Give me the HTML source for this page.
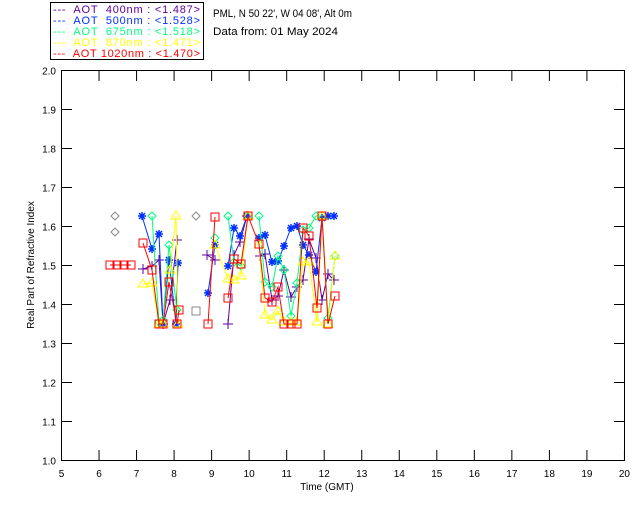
<!DOCTYPE html>
<html><head><meta charset="utf-8"><style>
body{margin:0;background:#fff;width:640px;height:512px;overflow:hidden}
svg{display:block;font-family:"Liberation Sans",sans-serif}
text{white-space:pre}
</style></head><body>
<svg id="s" width="640" height="512" xmlns="http://www.w3.org/2000/svg">
<rect x="50.5" y="2.5" width="153" height="57" fill="none" stroke="#000"/>
<g font-size="11">
<text x="53" y="13" fill="#6000a0" textLength="147" lengthAdjust="spacing">---  AOT  400nm : &lt;1.487&gt;</text>
<text x="53" y="24" fill="#0030ff" textLength="147" lengthAdjust="spacing">---  AOT  500nm : &lt;1.528&gt;</text>
<text x="53" y="35" fill="#00ff80" textLength="147" lengthAdjust="spacing">---  AOT  675nm : &lt;1.518&gt;</text>
<text x="53" y="46" fill="#ffff00" textLength="147" lengthAdjust="spacing">---  AOT  870nm : &lt;1.471&gt;</text>
<text x="53" y="57" fill="#ff0000" textLength="147" lengthAdjust="spacing">---  AOT 1020nm : &lt;1.470&gt;</text>
<text x="213" y="17" fill="#000" textLength="139" lengthAdjust="spacingAndGlyphs">PML, N 50 22', W 04 08', Alt 0m</text>
<text x="213" y="35" fill="#000" textLength="125" lengthAdjust="spacingAndGlyphs">Data from: 01 May 2024</text>
</g>
<rect x="61.5" y="70.5" width="563" height="390" fill="none" stroke="#000"/>
<g id="ax" stroke="#000"></g>
<g id="lb" font-size="10" fill="#000"></g>
<text x="327" y="490" font-size="10" text-anchor="middle">Time (GMT)</text>
<text transform="translate(34,265) rotate(-90)" font-size="10" text-anchor="middle">Real Part of Refractive Index</text>
<g id="d" fill="none" stroke-width="1"></g>
</svg>
<script>
var NS="http://www.w3.org/2000/svg";
function el(p,t,a,txt){var e=document.createElementNS(NS,t);for(var k in a)e.setAttribute(k,a[k]);if(txt)e.textContent=txt;document.getElementById(p).appendChild(e);return e;}
for(var i=0;i<=15;i++){var x=61.5+i*37.53;el("ax","line",{x1:x,y1:460,x2:x,y2:450});el("ax","line",{x1:x,y1:71,x2:x,y2:81});el("lb","text",{x:x,y:477,"text-anchor":"middle"},String(5+i));}
for(var j=0;j<=10;j++){var y=460.5-j*39;el("ax","line",{x1:61,y1:y,x2:72,y2:y});el("ax","line",{x1:624,y1:y,x2:614,y2:y});el("lb","text",{x:56,y:y+4,"text-anchor":"end"},(1+j/10).toFixed(1));}
function mk(c,t,x,y){
 if(t=="sq")el("d","rect",{x:x-4,y:y-4,width:8,height:8,stroke:c});
 else if(t=="pl"){el("d","path",{d:"M"+(x-5)+" "+y+"h10M"+x+" "+(y-5)+"v10",stroke:c});}
 else if(t=="st"){el("d","path",{d:"M"+(x-4)+" "+y+"h8M"+x+" "+(y-4)+"v8M"+(x-3)+" "+(y-3)+"l6 6M"+(x+3)+" "+(y-3)+"l-6 6",stroke:c,"stroke-width":1.5});}
 else if(t=="di")el("d","path",{d:"M"+x+" "+(y-4)+"l4 4l-4 4l-4-4z",stroke:c});
 else if(t=="tr")el("d","path",{d:"M"+x+" "+(y-5)+"l5 8h-10z",stroke:c});
}
function ser(c,t,segs){segs.forEach(function(s){el("d","polyline",{points:s.map(function(p){return p.join(",")}).join(" "),stroke:c});s.forEach(function(p){mk(c,t,p[0],p[1]);});});}
ser("#6000a0","pl",[[[143,269],[152,266],[159,260],[163,324],[170,300],[177,240]],[[207,255],[215,260]],[[228,324],[234,255],[240,242],[247,216]],[[260,256],[265,254],[272,300],[278,296],[284,270],[291,297],[297,287],[303,280],[309,239],[316,258],[322,300],[328,274],[334,280]]]);
ser("#0030ff","st",[[[142,216],[152,249],[159,234],[163,324],[169,260],[176,324],[178,263]],[[208,293],[215,245]],[[228,266],[234,228],[240,236],[247,216]],[[259,238],[265,235],[272,262],[278,261],[284,246],[291,228],[297,226],[303,245],[309,255],[316,272],[322,218],[328,216],[334,216]]]);
ser("#00ff80","di",[[[152,216],[159,322],[163,320],[169,245],[177,310]],[[215,238]],[[228,216],[234,262],[241,266],[248,216]],[[259,216],[265,282],[272,287],[278,256],[284,270],[291,316],[297,283],[303,230],[309,228],[316,216],[322,216],[328,318],[335,256]]]);
ser("#ffff00","tr",[[[143,284],[152,283],[159,324],[163,324],[170,270],[176,216],[178,324]],[[215,245],[228,279],[234,280],[241,276],[248,216]],[[259,245],[265,315],[272,320],[278,311],[284,322],[291,322],[297,322],[303,262],[309,262],[317,322],[322,216],[328,324],[335,256]]]);
ser("#ff0000","sq",[[[110,265],[117,265],[124,265],[131,265]],[[143,243],[152,270],[159,324],[163,324],[169,282],[177,324],[179,310]],[[208,324],[215,217]],[[228,298],[234,259],[241,264],[248,216],[259,244],[265,298],[272,302],[278,287],[284,324],[291,324],[297,324],[303,228],[309,236],[317,308],[322,216],[328,324],[335,296]]]);
mk("#888","di",115,232);mk("#888","di",115,216);mk("#888","sq",196,311);mk("#888","di",196,216);
</script>
</body></html>
